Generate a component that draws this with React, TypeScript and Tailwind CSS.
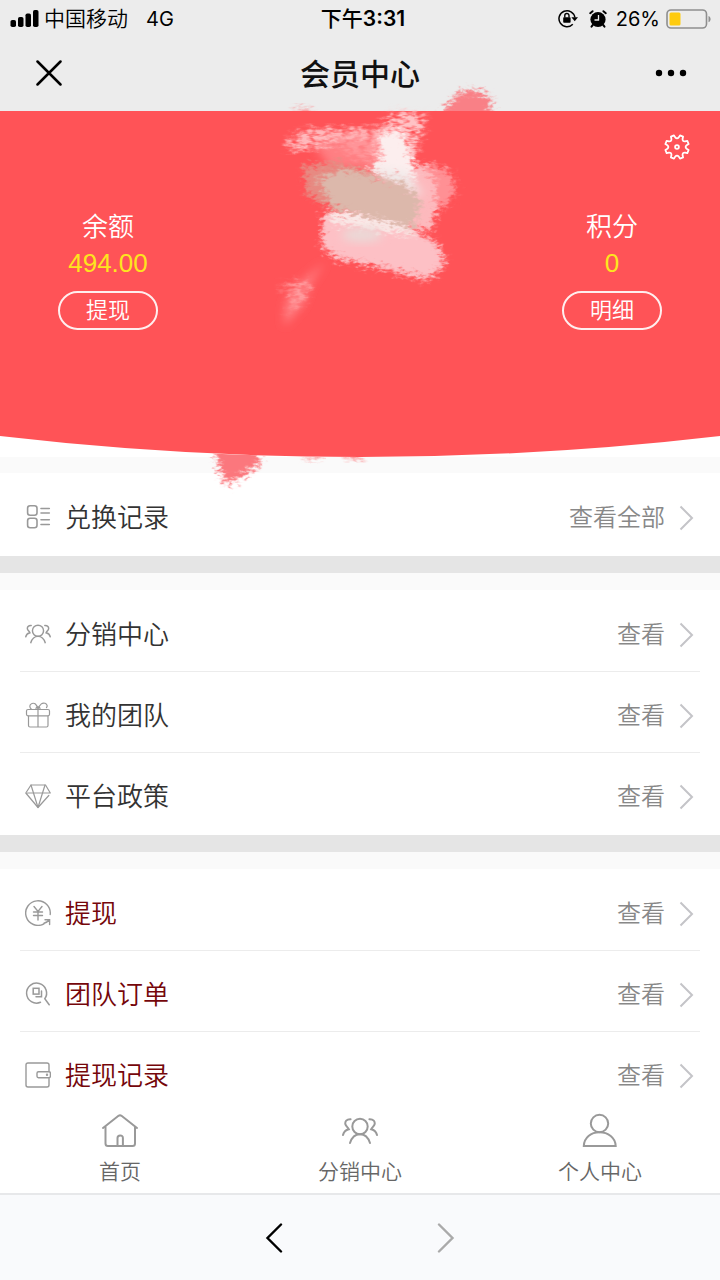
import { FC, ReactNode } from "react";

interface IconProps {
  className?: string;
}

interface RowProps {
  icon: ReactNode;
  label: string;
  action?: string;
  red?: boolean;
}

interface AccountProps {
  title: string;
  value: string;
  button: string;
}

const StatusBar: FC = () => {
  return (
    <div className="grid h-[37px] grid-cols-[1fr_auto_1fr] items-center pr-2 pl-2.5 text-xl text-black">
      <div className="flex items-center">
        <svg width="30" height="20" viewBox="0 0 30 20" aria-hidden="true">
          <rect x="0.5" y="11" width="5.5" height="7" rx="1.8" />
          <rect x="8" y="8" width="5.5" height="10" rx="1.8" />
          <rect x="15.5" y="4.5" width="5.5" height="13.5" rx="1.8" />
          <rect x="23" y="1" width="5.5" height="17" rx="1.8" />
        </svg>
        <span className="ml-1 text-[21px] leading-7 font-[350]">中国移动</span>
        <span className="ml-[18px] font-[Inter]">4G</span>
      </div>
      <div className="flex items-center pl-1 text-[21px] leading-7 font-medium">
        <span>下午</span>
        <span className="font-[Inter] font-semibold">3:31</span>
      </div>
      <div className="flex items-center justify-end">
        <svg width="20" height="20" viewBox="0 0 20 20" fill="none" stroke="#000" strokeWidth="1.5" aria-hidden="true">
          <path d="M14.8 15.2A8 8 0 1 1 16.9 8.5" />
          <path d="M13.4 8.3H20L16.7 12.3Z" fill="#000" stroke="none" />
          <rect x="5.2" y="8.2" width="7.4" height="5.6" rx="0.8" fill="#000" stroke="none" />
          <path d="M6.8 8.5V6.6A2.1 2.1 0 0 1 11 6.6V8.5" strokeWidth="1.4" />
        </svg>
        <svg className="ml-2.5" width="20" height="20" viewBox="0 0 20 20" aria-hidden="true">
          <circle cx="10" cy="10.5" r="7.6" />
          <path d="M2.2 4.2L4.6 2.2M17.8 4.2L15.4 2.2M4.8 16L3.5 17.6M15.2 16L16.5 17.6" stroke="#000" strokeWidth="2" strokeLinecap="round" fill="none" />
          <path d="M10.5 6V11H6.5" stroke="#ececec" strokeWidth="1.3" fill="none" />
        </svg>
        <span className="ml-2 font-[Inter]">26%</span>
        <svg className="ml-1.5" width="46" height="20" viewBox="0 0 46 20" aria-hidden="true">
          <rect x="1" y="1" width="39.5" height="18" rx="4" fill="none" stroke="#8e8e8e" strokeWidth="1.6" />
          <rect x="3.5" y="3.5" width="11" height="13" rx="1.5" fill="#fecb0e" />
          <path d="M42.5 7C45.3 8.2 45.3 12 42.5 13.2Z" fill="#8e8e8e" />
        </svg>
      </div>
    </div>
  );
};

const ListIcon: FC<IconProps> = ({ className }) => (
  <svg className={className} viewBox="0 0 26 26" fill="none" stroke="#999" strokeWidth="1.6" strokeLinecap="round">
    <rect x="2.6" y="1.8" width="9.4" height="9.4" rx="2.5" />
    <rect x="2.6" y="14.3" width="9.4" height="9.4" rx="2.5" />
    <path d="M16 4.5H24.3M16 9H24.3M16 15.8H24.3M16 20.5H24.3" />
  </svg>
);

const PeopleIcon: FC<IconProps> = ({ className }) => (
  <svg className={className} viewBox="0 0 36 28" fill="none" stroke="currentColor" strokeWidth="2" strokeLinecap="round">
    <circle cx="18" cy="9.5" r="7.7" />
    <path d="M8 26C10 19.8 13.5 17.3 18 17.3S26 19.8 28 26" />
    <path d="M8.6 2.2C4.5 2 2.8 4.7 3.4 7.3C3.8 9 5.6 9.8 6.8 12.2C4 12.8 1.8 14.3 1 18" />
    <path d="M27.4 2.2C31.5 2 33.2 4.7 32.6 7.3C32.2 9 30.4 9.8 29.2 12.2C32 12.8 34.2 14.3 35 18" />
  </svg>
);

const GiftIcon: FC<IconProps> = ({ className }) => (
  <svg className={className} viewBox="0 0 26 26" fill="none" stroke="#999" strokeWidth="1.2" strokeLinecap="round">
    <rect x="1.5" y="7.5" width="23" height="6.3" rx="1.5" />
    <path d="M3.5 14V23.5Q3.5 25 5 25H21.5Q23 25 23 23.5V14M13 7V25" />
    <path d="M13 7C11.5 2 9.5 0.6 7 1.5C4 2.6 4.5 5.5 6.2 7M13 7C15 2 17.5 0.3 20 1.3C22.5 2.5 22.5 4.5 21.5 5.5" />
    <path d="M11 6.8Q11 4.8 13 4.8T15 6.8" />
  </svg>
);

const DiamondIcon: FC<IconProps> = ({ className }) => (
  <svg className={className} viewBox="0 0 26 26" fill="none" stroke="#999" strokeWidth="1.2" strokeLinecap="round" strokeLinejoin="round">
    <path d="M23.8 12.5L13 24.5L0.8 10L6 2H20.5L25.3 10H2.5" />
    <path d="M6 2L13 24.5L20 2" />
  </svg>
);

const YenIcon: FC<IconProps> = ({ className }) => (
  <svg className={className} viewBox="0 0 26 26" fill="none" stroke="#999" strokeWidth="1.4" strokeLinecap="round">
    <path d="M25.2 14.5A12.3 12.3 0 1 0 19 23.8" />
    <path d="M19 23.3C21.5 22.8 23 21.5 24.5 19.8M20 19.8H24.6V24.5" />
    <path d="M9 6.5L13 11.5L17 6.5M8.5 12H17.5M8.5 15.5H17.5M13 11.5V20" />
  </svg>
);

const OrderIcon: FC<IconProps> = ({ className }) => (
  <svg className={className} viewBox="0 0 26 26" fill="none" stroke="#999" strokeWidth="1.5" strokeLinecap="round">
    <path d="M15.5 21.3A10 10 0 1 1 19.8 17.8L24.2 23.8" />
    <rect x="8.2" y="7.3" width="5.8" height="5.8" />
    <path d="M16.5 10V15.7H11" />
  </svg>
);

const WalletIcon: FC<IconProps> = ({ className }) => (
  <svg className={className} viewBox="0 0 26 26" fill="none" stroke="#999" strokeWidth="1.4" strokeLinecap="round">
    <path d="M24 9V3Q24 1 22 1H3Q1 1 1 3V23Q1 25 3 25H22Q24 25 24 23V16.5" />
    <path d="M13.5 9.8H24Q25.4 9.8 25.4 11.2V14.3Q25.4 15.7 24 15.7H13.5Q12 15.7 12 14.3V11.2Q12 9.8 13.5 9.8Z" />
    <circle cx="22" cy="12.8" r="0.5" />
  </svg>
);

const GearIcon: FC<IconProps> = ({ className }) => {
  // eight rounded teeth round a small hub
  const teeth = Array.from({ length: 8 }, (_, i) => i * 45 + 22.5);
  const at = (deg: number, r: number) => {
    const a = (deg * Math.PI) / 180;
    return `${(13 + r * Math.cos(a)).toFixed(2)} ${(13 + r * Math.sin(a)).toFixed(2)}`;
  };
  const d = teeth
    .map((t, i) => `${i === 0 ? "M" : "L"}${at(t - 8, 12)}L${at(t + 8, 12)}L${at(t + 12, 9.8)}Q${at(t + 22.5, 7.6)} ${at(t + 33, 9.8)}`)
    .join("");
  return (
    <svg className={className} viewBox="0 0 26 26" fill="none" stroke="#fff" strokeWidth="1.8" strokeLinejoin="round">
      <path d={`${d}Z`} />
      <circle cx="13" cy="13" r="1.9" />
    </svg>
  );
};

// loose brush marks painted across the banner and over its edges
const BrushMarks: FC = () => (
  <svg
    className="pointer-events-none absolute -top-[31px] left-1/2 z-10 -ml-40 h-[420px] w-80"
    viewBox="200 80 320 420"
    aria-hidden="true"
  >
    <defs>
      <filter id="rough" x="-20%" y="-20%" width="140%" height="140%">
        <feTurbulence type="fractalNoise" baseFrequency="0.16 0.3" numOctaves="2" seed="4" result="noise" />
        <feGaussianBlur in="SourceGraphic" stdDeviation="2.5" result="soft" />
        <feDisplacementMap in="soft" in2="noise" scale="18" xChannelSelector="R" yChannelSelector="G" />
        <feGaussianBlur stdDeviation="0.6" />
      </filter>
      <filter id="dry" x="-20%" y="-20%" width="140%" height="140%">
        <feTurbulence type="fractalNoise" baseFrequency="0.12 0.3" numOctaves="2" seed="9" result="noise" />
        <feGaussianBlur in="SourceGraphic" stdDeviation="3" result="soft" />
        <feDisplacementMap in="soft" in2="noise" scale="18" xChannelSelector="R" yChannelSelector="G" result="shape" />
        <feColorMatrix in="noise" type="matrix" values="0 0 0 0 0  0 0 0 0 0  0 0 0 0 0  0 0 0 3 -0.7" result="holes" />
        <feComposite in="shape" in2="holes" operator="in" />
        <feGaussianBlur stdDeviation="0.6" />
      </filter>
      <filter id="haze" x="-30%" y="-30%" width="160%" height="160%">
        <feGaussianBlur stdDeviation="5" />
      </filter>
      <clipPath id="above">
        <rect x="200" y="80" width="320" height="31" />
      </clipPath>
      <clipPath id="below">
        <path d="M200 453Q360 461 520 453V500H200Z" />
      </clipPath>
    </defs>
    <g clipPath="url(#above)">
      <path d="M438 120L454 97L467 89L488 94L492 104L486 120Z" fill="#f98086" filter="url(#rough)" />
      <path d="M292 118L299 106L308 107L316 118Z" fill="#f7a3a5" filter="url(#dry)" />
    </g>
    <path d="M310 138L390 130L392 170L330 168Z" fill="#ff7f83" filter="url(#haze)" />
    <path d="M286 143L302 130L345 128L395 130L392 140L335 142L308 150L290 150Z" fill="#ffb9bc" filter="url(#dry)" />
    <path d="M335 138L385 136L388 162L350 157Z" fill="#ff9498" filter="url(#dry)" />
    <path d="M392 112L426 114L420 138L412 162L376 158L374 140Z" fill="#ffc2c5" filter="url(#dry)" />
    <path d="M405 164L436 165L452 174L456 192L442 208L418 214Z" fill="#ff9094" filter="url(#rough)" />
    <path d="M404 164L424 166L436 182L436 212L432 230L404 226Z" fill="#fdb9bd" filter="url(#rough)" />
    <path d="M380 134L400 130L408 150L416 178L404 178L366 172L382 156Z" fill="#fceeee" filter="url(#rough)" />
    <path d="M322 214L350 212L400 222L438 244L446 262L428 280L385 269L334 258L322 246Z" fill="#fdc0c5" filter="url(#rough)" />
    <path d="M370 168L406 172L424 196L385 185Z" fill="#efe9e8" filter="url(#haze)" />
    <path d="M304 166L340 162L370 172L380 200L334 210L306 194Z" fill="#e78a82" filter="url(#rough)" />
    <path d="M318 178L345 169L405 184L422 202L412 230L372 221L332 207Z" fill="#dcb8ab" filter="url(#rough)" />
    <path d="M328 213L360 216L404 227L420 236L370 229L332 222Z" fill="#f9e9e7" filter="url(#rough)" />
    <ellipse cx="362" cy="235" rx="20" ry="7" fill="#ead9d7" filter="url(#haze)" />
    <path d="M325 262L310 284L303 304L284 326L286 302L300 283Z" fill="#ff8185" filter="url(#haze)" />
    <path d="M278 288L310 280L304 300L288 312L294 292Z" fill="#ff9b9e" filter="url(#dry)" />
    <g clipPath="url(#below)">
      <path d="M214 444L256 444L260 464L244 475L228 486L220 472Z" fill="#fb777d" filter="url(#rough)" />
      <path d="M302 446L322 446L318 461L306 460Z" fill="#fb9598" filter="url(#dry)" />
      <path d="M340 446L368 446L360 460L350 459Z" fill="#fb9598" filter="url(#dry)" />
    </g>
  </svg>
);

const Account: FC<AccountProps> = ({ title, value, button }) => {
  return (
    <div className="flex w-[30%] flex-col items-center text-white">
      <div className="text-[26px] leading-10 font-[350]">{title}</div>
      <div className="text-[26px] leading-8 text-[#fde51e]">{value}</div>
      <button className="mt-3 h-[39px] w-[100px] rounded-full border-2 border-white/90 text-[22px] leading-8 font-[350]">
        {button}
      </button>
    </div>
  );
};

const Row: FC<RowProps> = ({ icon, label, action = "查看", red = false }) => {
  return (
    <li className="mx-5 border-t border-[#ececec] first:border-transparent">
      <a href="#" className="flex h-20 items-center gap-3.5 pt-2 pr-1.5 pl-[5px] font-[350]">
        {icon}
        <span className={red ? "text-[26px] text-[#75060a]" : "text-[26px] text-[#333]"}>{label}</span>
        <span className="ml-auto text-2xl text-[#888]">{action}</span>
        <svg className="h-[26px] w-[15px]" viewBox="0 0 15 26" fill="none" stroke="#c4c4c8" strokeWidth="2">
          <path d="M1.5 1.5L13 13L1.5 24.5" />
        </svg>
      </a>
    </li>
  );
};

const Separator: FC = () => (
  <>
    <div className="h-[17px] bg-[#e5e5e5]" />
    <div className="h-[17px] bg-[#fafafa]" />
  </>
);

const App: FC = () => {
  const iconSize = "mb-0.5 h-[26px] w-[26px] shrink-0 text-[#999]";

  return (
    <div className="flex min-h-screen flex-col bg-white font-['Liberation_Sans','Noto_Sans_CJK_SC',sans-serif]">
      <header className="bg-[#ececec]">
        <StatusBar />
        <div className="grid h-[74px] grid-cols-[1fr_auto_1fr] items-center px-8 pb-0.5">
          <button aria-label="关闭" className="w-fit p-1">
            <svg width="26" height="26" viewBox="0 0 26 26" stroke="#000" strokeWidth="2.5" strokeLinecap="round">
              <path d="M1.5 1.5L24.5 24.5M24.5 1.5L1.5 24.5" />
            </svg>
          </button>
          <h1 className="pt-1 text-[30px] leading-10 font-medium text-[#111]">会员中心</h1>
          <button aria-label="更多" className="w-fit justify-self-end">
            <svg width="34" height="10" viewBox="0 0 34 10">
              <circle cx="5" cy="5" r="3.2" />
              <circle cx="17" cy="5" r="3.2" />
              <circle cx="29" cy="5" r="3.2" />
            </svg>
          </button>
        </div>
      </header>

      <main className="flex-1">
        <section className="relative h-[346px]">
          <svg className="absolute inset-0 h-full w-full" viewBox="0 0 720 346" preserveAspectRatio="none" aria-hidden="true">
            <path d="M0 0H720V325Q360 367 0 325Z" fill="#ff5357" />
          </svg>
          <BrushMarks />
          <div className="relative flex justify-end pt-[23px] pr-[30px]">
            <button aria-label="设置">
              <GearIcon className="block h-[26px] w-[26px]" />
            </button>
          </div>
          <div className="relative flex justify-between pt-[47px]">
            <Account title="余额" value="494.00" button="提现" />
            <Account title="积分" value="0" button="明细" />
          </div>
        </section>

        <div className="h-4 bg-[#fafafa]" />
        <ul className="pb-0.5">
          <Row icon={<ListIcon className={iconSize} />} label="兑换记录" action="查看全部" />
        </ul>
        <Separator />
        <ul className="pb-0.5">
          <Row icon={<PeopleIcon className={iconSize} />} label="分销中心" />
          <Row icon={<GiftIcon className={iconSize} />} label="我的团队" />
          <Row icon={<DiamondIcon className={iconSize} />} label="平台政策" />
        </ul>
        <Separator />
        <ul>
          <Row icon={<YenIcon className={iconSize} />} label="提现" red />
          <Row icon={<OrderIcon className={iconSize} />} label="团队订单" red />
          <Row icon={<WalletIcon className={iconSize} />} label="提现记录" red />
        </ul>
      </main>

      <nav className="grid h-[81px] grid-cols-3 text-[21px] leading-8 font-[350] text-[#666]">
        <a href="#" className="flex flex-col items-center gap-2">
          <svg className="h-9 w-9 text-[#999]" viewBox="0 0 36 36" fill="none" stroke="currentColor" strokeWidth="2" strokeLinecap="round">
            <path d="M1 16L16.5 3.8Q18 2.8 19.5 3.8L35 16" />
            <path d="M3.5 15V31.5Q3.5 34 6 34H30.5Q33 34 33 31.5V15" />
            <path d="M15.5 33.5V26Q15.5 23.5 18.2 23.5T20.9 26V33.5" />
          </svg>
          首页
        </a>
        <a href="#" className="flex flex-col items-center gap-2">
          <PeopleIcon className="h-9 w-9 pt-0.5 text-[#999]" />
          分销中心
        </a>
        <a href="#" className="flex flex-col items-center gap-2">
          <svg className="h-9 w-9 text-[#999]" viewBox="0 0 36 36" fill="none" stroke="currentColor" strokeWidth="2">
            <circle cx="17.5" cy="11.5" r="8.7" />
            <path d="M1.8 34C2 25.5 9 20.2 17.5 20.2S33.5 25.5 33.7 34Z" />
          </svg>
          个人中心
        </a>
      </nav>

      <footer className="flex h-[87px] items-center justify-center gap-[154px] border-t-2 border-[#e7e8ea] bg-[#f9fafc]">
        <button aria-label="后退">
          <svg width="18" height="30" viewBox="0 0 18 30" fill="none" stroke="#000" strokeWidth="2.4" strokeLinecap="round">
            <path d="M16 1.5L2.5 15L16 28.5" />
          </svg>
        </button>
        <button aria-label="前进">
          <svg width="18" height="30" viewBox="0 0 18 30" fill="none" stroke="#aaa" strokeWidth="2.4" strokeLinecap="round">
            <path d="M2 1.5L15.5 15L2 28.5" />
          </svg>
        </button>
      </footer>
    </div>
  );
};

export default App;
